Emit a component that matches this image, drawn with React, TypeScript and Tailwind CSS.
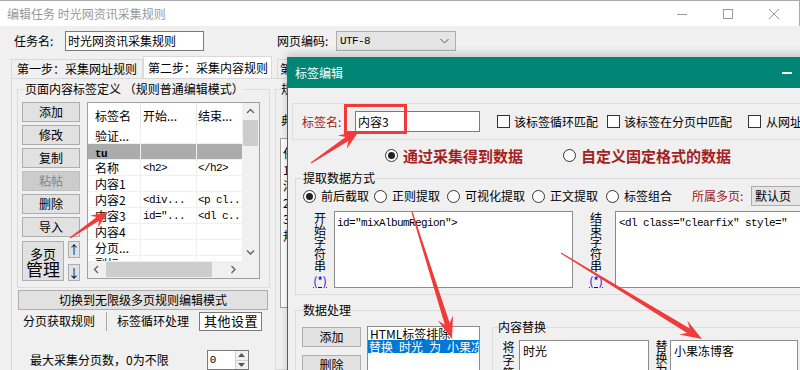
import React from 'react';

const mono = "font-['Liberation_Mono','Noto_Sans_CJK_SC',monospace] text-[11px] tracking-[-0.6px]";

function arrowPoints(x1: number, y1: number, x2: number, y2: number, head = 20, hw = 8, sw = 2.6) {
  const dx = x2 - x1;
  const dy = y2 - y1;
  const L = Math.hypot(dx, dy);
  const ux = dx / L;
  const uy = dy / L;
  const nx = -uy;
  const ny = ux;
  const bx = x2 - ux * head;
  const by = y2 - uy * head;
  const kx = x2 - ux * head * 0.72;
  const ky = y2 - uy * head * 0.72;
  const pts = [
    [x1 + nx * 0.6, y1 + ny * 0.6],
    [kx + nx * sw, ky + ny * sw],
    [bx + nx * hw, by + ny * hw],
    [x2, y2],
    [bx - nx * hw, by - ny * hw],
    [kx - nx * sw, ky - ny * sw],
    [x1 - nx * 0.6, y1 - ny * 0.6],
  ];
  return pts.map((p) => p.map((v) => v.toFixed(1)).join(',')).join(' ');
}

const Btn = ({ children, className = '', disabled = false }: { children: React.ReactNode; className?: string; disabled?: boolean }) => (
  <div
    className={`flex items-center justify-center border ${
      disabled ? 'bg-[#cccccc] border-[#bfbfbf] text-[#838383]' : 'bg-[#e1e1e1] border-[#adadad]'
    } ${className}`}
  >
    {children}
  </div>
);

const Check = () => <span className="block w-[13px] h-[13px] shrink-0 border border-[#333] bg-white" />;

const Radio = ({ on = false }: { on?: boolean }) => (
  <span className="w-[13px] h-[13px] shrink-0 rounded-full border border-[#333] bg-white flex items-center justify-center">
    {on && <span className="w-[7px] h-[7px] rounded-full bg-[#222]" />}
  </span>
);

const Chev = ({ dir }: { dir: 'up' | 'down' | 'left' | 'right' }) => {
  const d = {
    up: 'M1 5 L4.5 1.5 L8 5',
    down: 'M1 1.5 L4.5 5 L8 1.5',
    left: 'M5 1 L1.5 4.5 L5 8',
    right: 'M1.5 1 L5 4.5 L1.5 8',
  }[dir];
  const w = dir === 'up' || dir === 'down' ? 9 : 7;
  const h = dir === 'up' || dir === 'down' ? 7 : 9;
  return (
    <svg width={w} height={h} viewBox={`0 0 ${w} ${h}`}>
      <path d={d} fill="none" stroke="#606060" strokeWidth="1.3" />
    </svg>
  );
};

const VText = ({ t, className = '' }: { t: string; className?: string }) => (
  <div className={`flex flex-col items-center ${className}`}>
    {[...t].map((c, i) => (
      <span key={i}>{c}</span>
    ))}
  </div>
);

const rows = [
  { n: '验证...', s: '', e: '' },
  { n: 'tu', s: '', e: '', sel: true },
  { n: '名称', s: '<h2>', e: '</h2>' },
  { n: '内容1', s: '', e: '' },
  { n: '内容2', s: '<div...', e: '<p cl..' },
  { n: '内容3', s: 'id="...', e: '<dl c..' },
  { n: '内容4', s: '', e: '' },
  { n: '分页...', s: '', e: '' },
  { n: '副标', s: '', e: '' },
];

const TagList = () => (
  <div className="w-[173px] h-[177px] border border-[#a0a0a0] bg-white flex flex-col shrink-0">
    <div className="flex h-[158px]">
      <div className="w-[154px] overflow-hidden">
        <div className="flex h-[25px] w-[170px]">
          <div className="w-[53px] border-r border-[#e5e5e5] pl-[7px] flex items-center">标签名</div>
          <div className="w-[56px] border-r border-[#e5e5e5] pl-[2px] flex items-center">开始...</div>
          <div className="w-[60px] pl-[1px] flex items-center">结束...</div>
        </div>
        {rows.map((r, i) => (
          <div key={i} className="flex h-[16px] w-[170px] leading-[16px]">
            <div className={`w-[53px] border-r border-b border-[#f0f0f0] pl-[7px] whitespace-nowrap overflow-hidden ${r.sel ? 'bg-[#ababab]' : ''}`}>
              {r.sel ? <span className={`${mono} font-bold`}>{r.n}</span> : r.n}
            </div>
            <div className={`w-[56px] border-r border-b border-[#f0f0f0] pl-[2px] whitespace-nowrap overflow-hidden ${mono} leading-[16px] ${r.sel ? 'bg-[#ababab]' : ''}`}>
              {r.s}
            </div>
            <div className={`w-[60px] border-b border-[#f0f0f0] pl-[1px] whitespace-nowrap overflow-hidden ${mono} leading-[16px] ${r.sel ? 'bg-[#ababab]' : ''}`}>
              {r.e}
            </div>
          </div>
        ))}
      </div>
      <div className="w-[17px] bg-[#f0f0f0] flex flex-col">
        <div className="h-[17px] flex items-center justify-center">
          <Chev dir="up" />
        </div>
        <div className="mx-[1px] h-[26px] bg-[#cdcdcd]" />
        <div className="flex-1" />
        <div className="h-[17px] flex items-center justify-center">
          <Chev dir="down" />
        </div>
      </div>
    </div>
    <div className="flex h-[17px]">
      <div className="w-[154px] bg-[#f0f0f0] flex items-center">
        <div className="w-[17px] flex justify-center">
          <Chev dir="left" />
        </div>
        <div className="ml-[1px] w-[106px] h-[15px] bg-[#cdcdcd]" />
        <div className="flex-1" />
        <div className="w-[17px] flex justify-center">
          <Chev dir="right" />
        </div>
      </div>
      <div className="w-[17px] bg-[#f0f0f0]" />
    </div>
  </div>
);

const LeftPage = () => (
  <div className="ml-[11px] w-[264px] shrink-0 border-l border-t border-[#d9d9d9] bg-[#f0f0f0] flex flex-col">
    <fieldset className="ml-[5px] mt-[3px] w-[253px] min-w-0 border border-[#dcdcdc]">
      <legend className="ml-[7px] leading-[14px]">页面内容标签定义 （规则普通编辑模式）</legend>
      <div className="flex pl-[4px] mt-[6px] pb-[6px]">
        <div className="flex flex-col gap-[3px] w-[58px]">
          <Btn className="h-[20px]">添加</Btn>
          <Btn className="h-[20px]">修改</Btn>
          <Btn className="h-[20px]">复制</Btn>
          <Btn className="h-[20px]" disabled>
            粘帖
          </Btn>
          <Btn className="h-[20px]">删除</Btn>
          <Btn className="h-[20px]">导入</Btn>
          <div className="flex mt-[1px]">
            <Btn className="w-[42px] h-[40px] flex-col">
              <span className="text-[13px] leading-[12px] mt-[2px]">多页</span>
              <span className="text-[17px] leading-[17px]">管理</span>
            </Btn>
            <div className="ml-[4px] flex flex-col justify-between h-[40px]">
              <Btn className="w-[12px] h-[17px] text-[12px] leading-none">↑</Btn>
              <Btn className="w-[12px] h-[17px] text-[12px] leading-none">↓</Btn>
            </div>
          </div>
        </div>
        <div className="ml-[7px]">
          <TagList />
        </div>
      </div>
    </fieldset>
    <Btn className="ml-[6px] mt-[2px] w-[250px] h-[22px]">切换到无限级多页规则编辑模式</Btn>
    <div className="flex h-[22px] mt-[2px] ml-[11px]">
      <span className="pr-[11px] flex items-center">分页获取规则</span>
      <span className="w-px bg-[#a8a8a8]" />
      <span className="pl-[10px] pr-[10px] flex items-center">标签循环处理</span>
      <span className="w-[63px] border border-[#7a7a7a] bg-white pl-[4px] flex items-center text-[13px] tracking-[0.5px]">其他设置</span>
    </div>
    <div className="flex items-center mt-[19px] h-[20px]">
      <span className="ml-[18px]">最大采集分页数，0为不限</span>
      <div className="ml-[38px] w-[42px] h-[20px] border border-[#7a7a7a] bg-white flex">
        <span className={`${mono} pl-[2px] pt-[1px] flex-1`}>0</span>
        <div className="w-[13px] flex flex-col border-l border-[#cfcfcf] bg-[#f0f0f0]">
          <div className="flex-1 flex items-center justify-center border-b border-[#cfcfcf]">
            <svg width="7" height="4" viewBox="0 0 7 4">
              <path d="M0 4 L3.5 0 L7 4 Z" fill="#555" />
            </svg>
          </div>
          <div className="flex-1 flex items-center justify-center">
            <svg width="7" height="4" viewBox="0 0 7 4">
              <path d="M0 0 L3.5 4 L7 0 Z" fill="#555" />
            </svg>
          </div>
        </div>
      </div>
    </div>
  </div>
);

const RightPage = () => (
  <div className="flex-1 border-t border-[#d9d9d9] bg-[#f0f0f0] flex flex-col">
    <fieldset className="mt-[3px] min-w-0 border border-[#dcdcdc] h-[290px]">
      <legend className="ml-[5px] leading-[14px]">规则测试</legend>
      <div className="pl-[5px] mt-[16px]">典型页面</div>
      <div className="ml-[4px] mt-[10px] h-[170px] border border-[#a0a0a0] bg-white pl-[2px] pt-[6px] leading-[16.5px]">
        <div>任务</div>
        <div>1</div>
        <div>洋</div>
        <div>2</div>
        <div>3</div>
        <div>规</div>
      </div>
    </fieldset>
  </div>
);

const Dialog = () => (
  <div className="absolute left-[287px] top-[57px] w-[530px] h-[330px] bg-[#f0f0f0] border-l border-[#018574] shadow-[0_-3px_8px_rgba(0,0,0,0.18)] flex flex-col">
    <div className="h-[31px] shrink-0 bg-[#018574] flex items-center text-white">
      <span className="pl-[7px] shrink-0">标签编辑</span>
      <span className="ml-[439px] w-[10px] h-[2px] shrink-0 bg-white" />
    </div>
    <div className="pl-[4px] pt-[15px] flex flex-col">
      {/* tag name group */}
      <div className="w-[540px] h-[37px] border border-[#dcdcdc] flex items-center pl-[9px] whitespace-nowrap *:shrink-0">
        <span className="text-[#9b2020] w-[53px]">标签名:</span>
        <div className="w-[125px] h-[21px] border border-[#7a7a7a] bg-white pl-[2px] flex items-center">内容3</div>
        <span className="ml-[17px] flex">
          <Check />
        </span>
        <span className="ml-[4px]">该标签循环匹配</span>
        <span className="ml-[9px] flex">
          <Check />
        </span>
        <span className="ml-[4px]">该标签在分页中匹配</span>
        <span className="ml-[16px] flex">
          <Check />
        </span>
        <span className="ml-[5px]">从网址中匹配</span>
      </div>

      {/* source radios */}
      <div className="h-[31px] flex items-center pl-[93px] text-[15px] font-bold text-[#a31f1f] whitespace-nowrap *:shrink-0">
        <Radio on />
        <span className="ml-[5px]">通过采集得到数据</span>
        <span className="ml-[40px] flex">
          <Radio />
        </span>
        <span className="ml-[5px]">自定义固定格式的数据</span>
      </div>

      {/* extraction group */}
      <fieldset className="ml-[3px] w-[540px] min-w-0 border border-[#dcdcdc]">
        <legend className="ml-[7px] leading-[14px]">提取数据方式</legend>
        <div className="flex items-center h-[18px] mt-[2px] pl-[7px] whitespace-nowrap *:shrink-0">
          <Radio on />
          <span className="ml-[5px]">前后截取</span>
          <span className="ml-[5px] flex">
            <Radio />
          </span>
          <span className="ml-[5px]">正则提取</span>
          <span className="ml-[7px] flex">
            <Radio />
          </span>
          <span className="ml-[5px]">可视化提取</span>
          <span className="ml-[7px] flex">
            <Radio />
          </span>
          <span className="ml-[5px]">正文提取</span>
          <span className="ml-[8px] flex">
            <Radio />
          </span>
          <span className="ml-[5px]">标签组合</span>
          <span className="ml-[20px] text-[#9b2020] w-[59px]">所属多页:</span>
          <div className="w-[80px] h-[20px] border border-[#adadad] bg-[#e5e5e5] pl-[3px] flex items-center">默认页</div>
        </div>
        <div className="flex mt-[6px] pb-[6px]">
          <div className="ml-[12px] w-[24px] flex flex-col items-center pt-[1px]">
            <VText t="开始字符串" className="leading-[12px]" />
            <span className="mt-[3px] text-[#0000ee] underline leading-[12px]">(*)</span>
          </div>
          <div className={`ml-[2px] w-[239px] h-[77px] border border-[#8c8c8c] bg-white pl-[2px] pt-[4px] ${mono} leading-[14px]`}>
            id="mixAlbumRegion"&gt;
          </div>
          <div className="ml-[11px] w-[24px] flex flex-col items-center pt-[1px]">
            <VText t="结束字符串" className="leading-[12px]" />
            <span className="mt-[3px] text-[#0000ee] underline leading-[12px]">(*)</span>
          </div>
          <div className={`ml-[7px] w-[200px] h-[77px] border border-[#8c8c8c] bg-white pl-[3px] pt-[4px] ${mono} leading-[14px] whitespace-nowrap`}>
            &lt;dl class="clearfix" style="
          </div>
        </div>
      </fieldset>

      {/* data processing group */}
      <fieldset className="ml-[3px] mt-[8px] w-[540px] min-w-0 border border-[#dcdcdc] h-[80px]">
        <legend className="ml-[7px] leading-[14px]">数据处理</legend>
        <div className="flex items-start pl-[6px]">
          <div className="flex flex-col gap-[8px] mt-[10px]">
            <Btn className="w-[59px] h-[20px]">添加</Btn>
            <Btn className="w-[59px] h-[20px]">删除</Btn>
          </div>
          <div className="ml-[6px] mt-[9px] w-[113px] h-[50px] border border-[#8c8c8c] bg-white overflow-hidden">
            <div className="h-[13px] leading-[13px] pl-[2px] whitespace-nowrap">HTML标签排除</div>
            <div className="h-[13px] leading-[13px] pl-[1px] whitespace-nowrap bg-[#0078d7] text-white">{'替换\u2002时光\u2002为\u2002小果冻博客'}</div>
          </div>
          <fieldset className="ml-[12px] mt-[3px] w-[320px] min-w-0 border border-[#dcdcdc] h-[60px]">
            <legend className="ml-[5px] leading-[14px]">内容替换</legend>
            <div className="flex mt-[6px] pl-[9px]">
              <VText t="将字符" className="w-[13px] leading-[13px]" />
              <div className="ml-[4px] w-[130px] h-[40px] border border-[#8c8c8c] bg-white pl-[3px] pt-[2px]">时光</div>
              <VText t="替换为" className="ml-[6px] w-[13px] leading-[12px]" />
              <div className="ml-[2px] w-[128px] h-[40px] border border-[#8c8c8c] bg-white pl-[3px] pt-[2px]">小果冻博客</div>
            </div>
          </fieldset>
        </div>
      </fieldset>
    </div>
  </div>
);

export default function App() {
  return (
    <div className="relative w-[800px] h-[370px] overflow-hidden bg-[#f0f0f0] text-[12px] leading-[16px] text-black font-['Noto_Sans_CJK_SC','Microsoft_YaHei',sans-serif]">
      {/* title bar */}
      <div className="h-[26px] bg-white border-t border-r border-[#aaaaaa] flex items-center pr-[2px]">
        <span className="pl-[7px] text-[#999]">编辑任务 时光网资讯采集规则</span>
        <div className="ml-auto flex h-full items-center">
          <div className="w-[46px] flex justify-center">
            <svg width="10" height="10" viewBox="0 0 10 10">
              <line x1="0" y1="5.5" x2="10" y2="5.5" stroke="#999" />
            </svg>
          </div>
          <div className="w-[46px] flex justify-center">
            <svg width="10" height="10" viewBox="0 0 10 10">
              <rect x="0.5" y="0.5" width="9" height="9" fill="none" stroke="#999" />
            </svg>
          </div>
          <div className="w-[46px] flex justify-center">
            <svg width="10" height="10" viewBox="0 0 10 10">
              <path d="M0 0 L10 10 M10 0 L0 10" stroke="#999" />
            </svg>
          </div>
        </div>
      </div>

      {/* task row */}
      <div className="h-[30px] flex items-center">
        <span className="ml-[14px] w-[51px]">任务名:</span>
        <div className="w-[139px] h-[20px] bg-white border border-[#7a7a7a] flex items-center pl-[2px]">时光网资讯采集规则</div>
        <span className="ml-[73px] w-[59px]">网页编码:</span>
        <div className="w-[120px] h-[20px] bg-[#e5e5e5] border border-[#adadad] flex items-center pl-[3px]">
          <span className={mono}>UTF-8</span>
          <svg className="ml-auto mr-[6px]" width="9" height="6" viewBox="0 0 9 6">
            <path d="M0.5 1 L4.5 5 L8.5 1" fill="none" stroke="#555" />
          </svg>
        </div>
      </div>

      {/* tabs */}
      <div className="h-[22px] flex items-end pl-[11px]">
        <div className="h-[19px] w-[132px] border border-b-0 border-[#d9d9d9] bg-[#f0f0f0] flex items-center pl-[5px]">第一步：采集网址规则</div>
        <div className="h-[22px] w-[129px] border border-b-0 border-[#d9d9d9] bg-white flex items-center pl-[4px] whitespace-nowrap overflow-hidden">第二步：采集内容规则</div>
        <div className="ml-[5px] h-[19px] w-[130px] border border-b-0 border-[#d9d9d9] bg-[#f0f0f0] flex items-center pl-[2px] whitespace-nowrap">第三步：发布内容设置</div>
      </div>

      {/* tab pages */}
      <div className="flex h-[292px]">
        <LeftPage />
        <RightPage />
      </div>

      <Dialog />

      {/* annotations */}
      <div className="absolute left-[344px] top-[104px] w-[63px] h-[30px] border-[3px] border-[#f03b3b] pointer-events-none" />
      <svg className="absolute left-0 top-0 pointer-events-none" width="800" height="370" viewBox="0 0 800 370">
        <polygon points={arrowPoints(70, 238, 108, 212, 17, 7, 2.2)} fill="#f03b3b" />
        <polygon points={arrowPoints(311, 163, 359, 131, 20, 8, 2.5)} fill="#f03b3b" />
        <polygon points={arrowPoints(412, 212, 452, 339, 22, 8, 2.6)} fill="#f03b3b" />
        <polygon points={arrowPoints(561, 253, 702, 339, 22, 8, 2.6)} fill="#f03b3b" />
      </svg>
    </div>
  );
}
